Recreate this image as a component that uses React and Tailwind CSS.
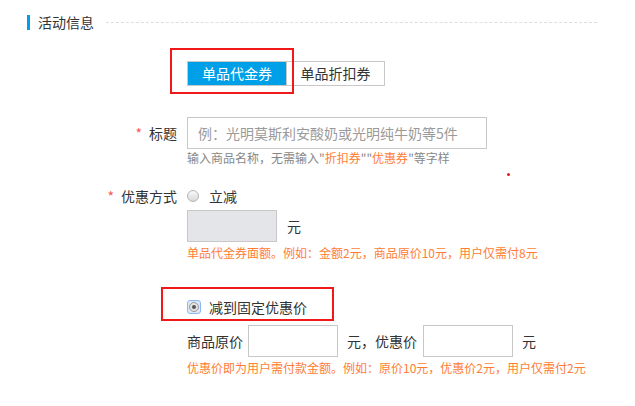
import React from 'react';

const FONT = { fontFamily: '"Noto Sans CJK SC", "Liberation Sans", sans-serif' };

const Radio = () => (
  <span className="w-[12px] h-[12px] rounded-full border border-[#b5b5b5] bg-gradient-to-b from-[#fafafa] to-[#d9d9d9] shrink-0" />
);

const CheckedRadio = () => (
  <span className="w-[14px] h-[14px] rounded-[3px] border border-[#8eb8f4] bg-[#dce9fb] flex items-center justify-center shrink-0">
    <span className="w-[10px] h-[10px] rounded-full border border-[#9a9a9a] bg-[#e2e2e2] flex items-center justify-center">
      <span className="w-[4px] h-[4px] rounded-full bg-[#555]" />
    </span>
  </span>
);

const Label = ({ children }) => (
  <div className="w-[177px] flex justify-end items-center text-[14px] text-[#333] shrink-0">
    <span className="text-[#f55a5a] mr-[7px]">*</span>
    <span>{children}</span>
  </div>
);

const App = () => {
  return (
    <div className="relative w-[635px] h-[406px] bg-white overflow-hidden" style={FONT}>
      {/* 标题栏 */}
      <div className="mt-[14px] h-[16px] flex items-center pl-[27px] pr-[38px]">
        <span className="w-[3px] h-[15px] bg-[#00a0e9]" />
        <span className="ml-[8px] text-[14px] leading-[16px] text-[#333]">活动信息</span>
        <span className="ml-[12px] flex-1 border-t border-dashed border-[#dedede]" />
      </div>

      {/* 券类型 */}
      <div className="mt-[31px] pl-[187px] flex">
        <button className="w-[100px] h-[25px] bg-[#00a0e9] border border-[#c8c8c8] text-white text-[14px] leading-[23px]">
          单品代金券
        </button>
        <button className="w-[98px] h-[25px] bg-white border border-l-0 border-[#c8c8c8] text-[#333] text-[14px] leading-[23px]">
          单品折扣券
        </button>
      </div>

      {/* 标题 */}
      <div className="mt-[31px] flex items-center">
        <Label>标题</Label>
        <div className="ml-[10px] w-[300px] h-[32px] border border-[#c8c8c8] flex items-center pl-[10px] text-[14px] text-[#9a9a9a]">
          例：光明莫斯利安酸奶或光明纯牛奶等5件
        </div>
      </div>
      <div className="mt-[1px] pl-[187px] text-[12px] leading-[16px] text-[#888]">
        输入商品名称，无需输入"<span className="text-[#ff7d33]">折扣券</span>""<span className="text-[#ff7d33]">优惠券</span>"等字样
      </div>

      {/* 优惠方式 */}
      <div className="mt-[20px] h-[20px] flex items-center">
        <Label>优惠方式</Label>
        <div className="ml-[10px] flex items-center">
          <Radio />
          <span className="ml-[10px] text-[14px] text-[#333]">立减</span>
        </div>
      </div>
      <div className="mt-[4px] pl-[187px] flex items-center">
        <div className="w-[90px] h-[32px] border border-[#c8c8c8] bg-[#e4e5e9]" />
        <span className="ml-[10px] text-[14px] text-[#333]">元</span>
      </div>
      <div className="mt-[3px] pl-[187px] text-[12px] leading-[16px] text-[#ff7d33]">
        单品代金券面额。例如：金额2元，商品原价10元，用户仅需付8元
      </div>

      {/* 减到固定优惠价 */}
      <div className="mt-[36px] h-[20px] pl-[187px] flex items-center">
        <CheckedRadio />
        <span className="ml-[8px] text-[14px] text-[#333]">减到固定优惠价</span>
      </div>
      <div className="mt-[8px] pl-[187px] flex items-center text-[14px] text-[#333]">
        <span>商品原价</span>
        <div className="ml-[5px] w-[90px] h-[32px] border border-[#c8c8c8]" />
        <span className="ml-[9px]">元，优惠价</span>
        <div className="ml-[6px] w-[90px] h-[32px] border border-[#c8c8c8]" />
        <span className="ml-[9px]">元</span>
      </div>
      <div className="mt-[3px] pl-[187px] text-[12px] leading-[16px] text-[#ff7d33]">
        优惠价即为用户需付款金额。例如：原价10元，优惠价2元，用户仅需付2元
      </div>

      {/* 标注框 */}
      <div className="absolute left-[170px] top-[48px] w-[124px] h-[46px] border-2 border-[#f01818]" />
      <div className="absolute left-[161px] top-[287px] w-[173px] h-[34px] border-2 border-[#f01818]" />
      <div className="absolute left-[507px] top-[173px] w-[3px] h-[3px] bg-[#f01818] rounded-full" />
    </div>
  );
};

export default App;
